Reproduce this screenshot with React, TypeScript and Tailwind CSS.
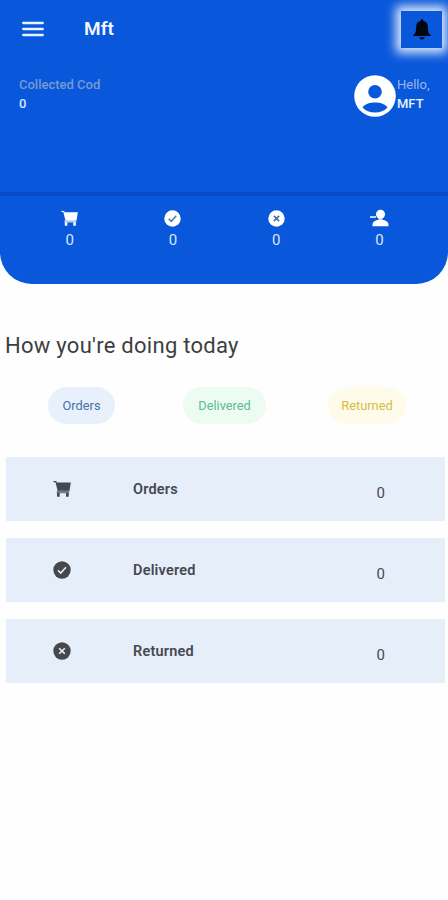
import type { ReactNode } from "react";

type IconProps = { className?: string };

function CartIcon({ className }: IconProps) {
  return (
    <svg viewBox="0 0 18 18" className={className} fill="currentColor">
      <path d="M.4 1h2.900l.5 1.500h14l-1.300 8.300H4.600L2.500 2.200H.4z" />
      <path d="M4 10.500h12.200v2.800H3.600z" opacity=".7" />
      <path d="M4 13h2.700v3.800H4zM13 13h2.700v3.800H13z" />
    </svg>
  );
}

function CheckIcon({ className, mark }: IconProps & { mark: string }) {
  return (
    <svg viewBox="0 0 18 18" className={className} fill="none">
      <circle cx="9" cy="9" r="8.7" fill="currentColor" />
      <path d="M5 9.400l2.700 2.600 5.300-5.800" stroke={mark} strokeWidth="1.6" />
    </svg>
  );
}

function CrossIcon({ className, mark }: IconProps & { mark: string }) {
  return (
    <svg viewBox="0 0 18 18" className={className} fill="none">
      <circle cx="9" cy="9" r="8.7" fill="currentColor" />
      <path d="M6.200 6.200l5.600 5.600M11.800 6.200l-5.600 5.600" stroke={mark} strokeWidth="1.6" />
    </svg>
  );
}

function PersonRemoveIcon() {
  return (
    <svg viewBox="0 0 20 18" className="h-[18px] w-5" fill="currentColor">
      <circle cx="11.500" cy="5.200" r="4.500" />
      <path d="M3.500 17.300v-1.600c0-3.200 3.500-5 8-5s8 1.800 8 5v1.600zM1 7.200h6v1.600H1z" />
      <path d="M9.500 9h4v2.500h-4z" opacity=".7" />
    </svg>
  );
}

function Stat({ children }: { children: ReactNode }) {
  return (
    <div className="flex flex-1 flex-col items-center">
      <div className="flex h-[18px] items-center">{children}</div>
      <span className="mt-1 text-[15px] leading-[18px] text-[#d9e8ff]">0</span>
    </div>
  );
}

function Row({ icon, label }: { icon: ReactNode; label: string }) {
  return (
    <div className="flex h-16 items-center bg-[#e6eefa] text-[#45494f]">
      <div className="flex w-[127px] pl-[47px]">{icon}</div>
      <span className="flex-1 pt-[2px] text-[14.5px] font-semibold tracking-[0.2px]">{label}</span>
      <span className="mt-[8px] mr-[60px] text-[15px]">0</span>
    </div>
  );
}

export default function App() {
  return (
    <div className="h-[900px] w-full overflow-hidden bg-[#fefefe] font-['Roboto',sans-serif]">
      <header className="flex h-[284px] flex-col overflow-hidden rounded-b-[32px] bg-[#0957db]">
        <div className="flex h-[58px] shrink-0 items-center pr-[6px] pl-[22px]">
          <svg viewBox="0 0 22 16" className="h-4 w-[22px]" fill="none" stroke="#e9f4ff" strokeWidth="2.3" strokeLinecap="round">
            <path d="M1.200 2h19.600M1.200 8h19.600M1.200 14h19.600" />
          </svg>
          <h1 className="ml-10 flex-1 text-[19px] leading-6 font-semibold text-[#eff7ff]">Mft</h1>
          <button className="flex h-[37px] w-[41px] items-center justify-center bg-[#0957db] shadow-[0_0_10px_5px_rgba(235,245,255,0.95)]">
            <svg viewBox="0 0 18 21" className="h-[21px] w-[18px]" fill="#020714">
              <path d="M9 .3c.9 0 1.400.6 1.400 1.500 3.200.8 4.500 3.200 4.500 6.500 0 4.800.5 6 2.800 7.600v1H.3v-1c2.300-1.600 2.800-2.800 2.800-7.600 0-3.300 1.300-5.700 4.500-6.500C7.600.9 8.100.3 9 .3zM6.400 18.200h5.200c-.2 1.500-1.200 2.200-2.600 2.200s-2.400-.7-2.600-2.200z" />
            </svg>
          </button>
        </div>
        <div className="flex h-[134px] shrink-0 items-start justify-between pt-[17px] pl-[19px] text-[13px] font-medium">
          <div className="flex flex-col pt-px leading-[18.5px]">
            <span className="text-[#779bd2]">Collected Cod</span>
            <span className="text-[#d3e8ff]">0</span>
          </div>
          <div className="flex">
            <svg viewBox="0 0 42 42" className="h-[42px] w-[42px]">
              <circle cx="21" cy="21" r="20.8" fill="#fff" />
              <circle cx="21" cy="16.8" r="6.8" fill="#0957db" />
              <path d="M8.500 32.400c2.800-3.600 7.800-4.800 12.500-4.800s9.700 1.200 12.500 4.800c-3 3.400-7.500 5.200-12.500 5.200S11.500 35.800 8.500 32.400z" fill="#0957db" />
            </svg>
            <div className="flex w-[52px] flex-col pl-[1px] leading-[19px]">
              <span className="font-normal text-[#9ab8e7]">Hello,</span>
              <span className="text-[#e6f2ff]">MFT</span>
            </div>
          </div>
        </div>
        <div className="h-1 shrink-0 bg-[#064bc3]" />
        <div className="flex pt-[13px] pr-[17px] pl-[18px] text-white">
          <Stat><CartIcon className="h-[17px] w-[17px]" /></Stat>
          <Stat><CheckIcon className="h-[17px] w-[17px]" mark="#4f78b5" /></Stat>
          <Stat><CrossIcon className="h-[17px] w-[17px]" mark="#3e6cb0" /></Stat>
          <Stat><PersonRemoveIcon /></Stat>
        </div>
      </header>
      <main>
        <h2 className="mt-[47px] ml-[5px] text-[22px] leading-[30px] tracking-[0.27px] text-[#3c3e40]">How you're doing today</h2>
        <div className="mt-[26px] flex items-center pl-[48px] text-[12.800px] leading-[37px]">
          <span className="w-[67px] rounded-full bg-[#e8f0fb] text-center text-[#4770a8]">Orders</span>
          <span className="ml-[68px] w-[83px] rounded-full bg-[#ecfcf3] text-center text-[#5dba8e]">Delivered</span>
          <span className="ml-[62px] w-[78px] rounded-full bg-[#fffbea] text-center text-[#d5bd45]">Returned</span>
        </div>
        <div className="mt-[33px] mr-[3px] ml-[6px] flex flex-col gap-[17px]">
          <Row icon={<CartIcon className="h-[18px] w-[18px]" />} label="Orders" />
          <Row icon={<CheckIcon className="h-[18px] w-[18px]" mark="#eaf1f5" />} label="Delivered" />
          <Row icon={<CrossIcon className="h-[18px] w-[18px]" mark="#eaf1f5" />} label="Returned" />
        </div>
      </main>
    </div>
  );
}
